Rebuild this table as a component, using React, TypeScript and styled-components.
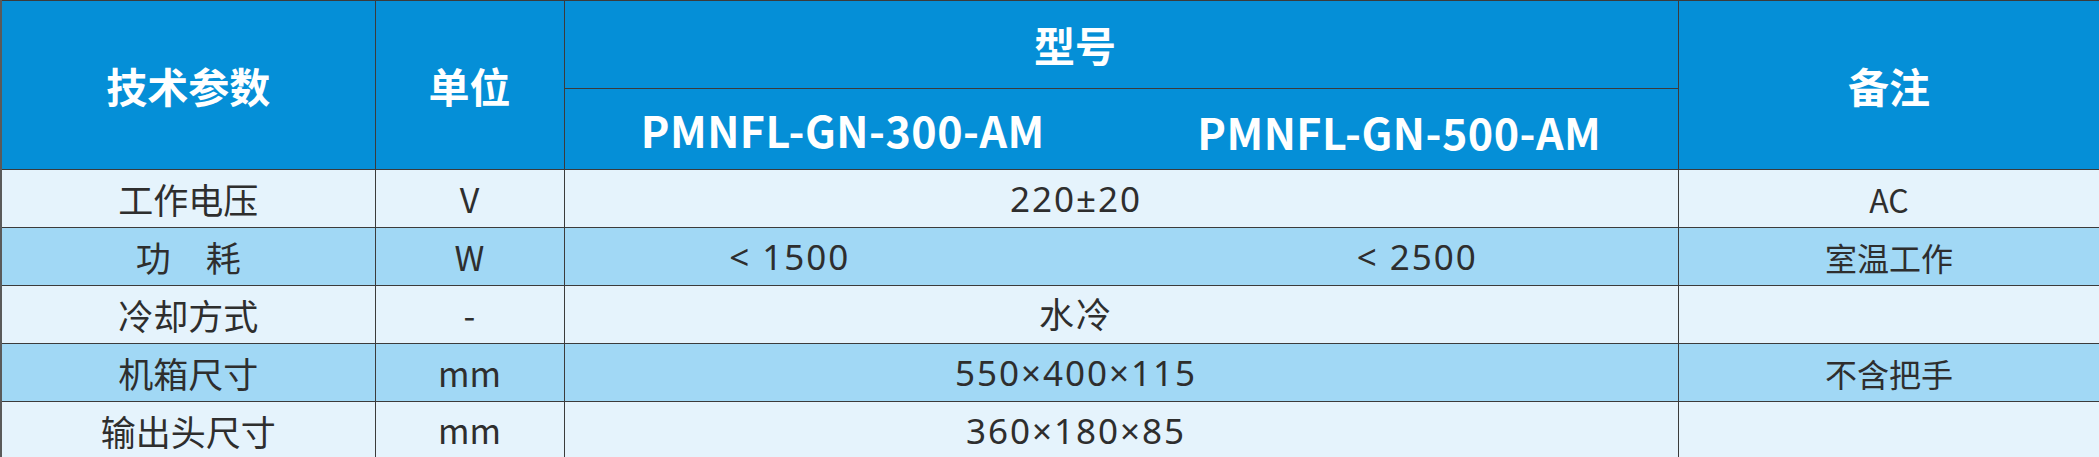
import * as React from 'react';
import styled, { createGlobalStyle } from 'styled-components';

const GlobalStyle = createGlobalStyle`
    html, body {
        margin: 0;
        padding: 0;
        background: #ffffff;
    }
    body {
        font-family: "Noto Sans CJK SC", "Noto Sans", sans-serif;
    }
`;

const HEADER_BG = '#058fd7';
const LINE = '#3b3b3b';

const Table = styled.table`
    width: 2099px;
    height: 457px;
    border-collapse: collapse;
    table-layout: fixed;
    border-left: solid 2px #5a5a5a;
    border-bottom: solid 2px #a8a8a8;
    border-right: solid 1px #8a8a8a;
`;

const Th = styled.th<{ $h?: number; $joinLeft?: boolean; $shift?: number }>`
    height: ${p => p.$h ? `${p.$h}px` : 'auto'};
    padding: 0;
    padding-right: ${p => p.$shift ? `${p.$shift}px` : '0'};
    background-color: ${HEADER_BG};
    border: solid 1px ${LINE};
    border-left: ${p => p.$joinLeft ? 'hidden' : `solid 1px ${LINE}`};
    color: #ffffff;
    font-size: 41px;
    font-weight: 700;
    text-align: center;
    vertical-align: middle;
    line-height: 1;
`;

const ModelName = styled.span<{ $dy?: number }>`
    display: inline-block;
    font-size: 43px;
    font-weight: 700;
    letter-spacing: 0.5px;
    transform: translateY(${p => p.$dy || 0}px);
`;

const Row = styled.tr<{ $alt?: boolean }>`
    height: 58px;
    background-color: ${p => p.$alt ? '#a1d8f5' : '#e5f3fc'};
`;

const Td = styled.td<{ $joinLeft?: boolean; $size?: number; $padL?: number; $padR?: number; $latin?: boolean }>`
    padding: 0;
    padding-left: ${p => p.$padL || 0}px;
    padding-right: ${p => p.$padR || 0}px;
    border: solid 1px ${LINE};
    border-left: ${p => p.$joinLeft ? 'hidden' : `solid 1px ${LINE}`};
    color: #2e2e2e;
    font-family: ${p => p.$latin
        ? '"Noto Sans", "Noto Sans CJK SC", sans-serif'
        : '"Noto Sans CJK SC", "Noto Sans", sans-serif'};
    font-size: ${p => p.$size || 34}px;
    letter-spacing: ${p => p.$latin ? '2px' : '0'};
    text-align: center;
    vertical-align: middle;
    line-height: 1;
    white-space: nowrap;
`;

interface SpecRow {
    name: string;
    unit: string;
    values: string[];
    note: string;
}

const rows: SpecRow[] = [
    { name: '工作电压', unit: 'V', values: ['220±20'], note: 'AC' },
    { name: '功　耗', unit: 'W', values: ['< 1500', '< 2500'], note: '室温工作' },
    { name: '冷却方式', unit: '-', values: ['水冷'], note: '' },
    { name: '机箱尺寸', unit: 'mm', values: ['550×400×115'], note: '不含把手' },
    { name: '输出头尺寸', unit: 'mm', values: ['360×180×85'], note: '' }
];

const App: React.FC = () => {

    const getValueCells = (values: string[]) => {
        if (values.length === 1) {
            return <Td colSpan={2} $padR={90} $size={35} $latin>{values[0]}</Td>;
        }
        return (
            <>
                <Td $padR={106} $size={35} $latin>{values[0]}</Td>
                <Td $joinLeft $padL={36} $size={35} $latin>{values[1]}</Td>
            </>
        );
    };

    return (
        <>
            <GlobalStyle />
            <Table>
                <colgroup>
                    <col style={{ width: 374 }} />
                    <col style={{ width: 189 }} />
                    <col style={{ width: 557 }} />
                    <col style={{ width: 557 }} />
                    <col style={{ width: 422 }} />
                </colgroup>
                <thead>
                    <tr>
                        <Th rowSpan={2}>技术参数</Th>
                        <Th rowSpan={2}>单位</Th>
                        <Th colSpan={2} $h={87} $shift={92}>型号</Th>
                        <Th rowSpan={2}>备注</Th>
                    </tr>
                    <tr>
                        <Th $h={80}><ModelName>PMNFL-GN-300-AM</ModelName></Th>
                        <Th $joinLeft><ModelName $dy={2}>PMNFL-GN-500-AM</ModelName></Th>
                    </tr>
                </thead>
                <tbody>
                    {rows.map((r, i) => (
                        <Row key={`spec-${r.name}`} $alt={i % 2 === 1}>
                            <Td $size={35}>{r.name}</Td>
                            <Td>{r.unit}</Td>
                            {getValueCells(r.values)}
                            <Td $size={32}>{r.note}</Td>
                        </Row>
                    ))}
                </tbody>
            </Table>
        </>
    );
};

export default App;
